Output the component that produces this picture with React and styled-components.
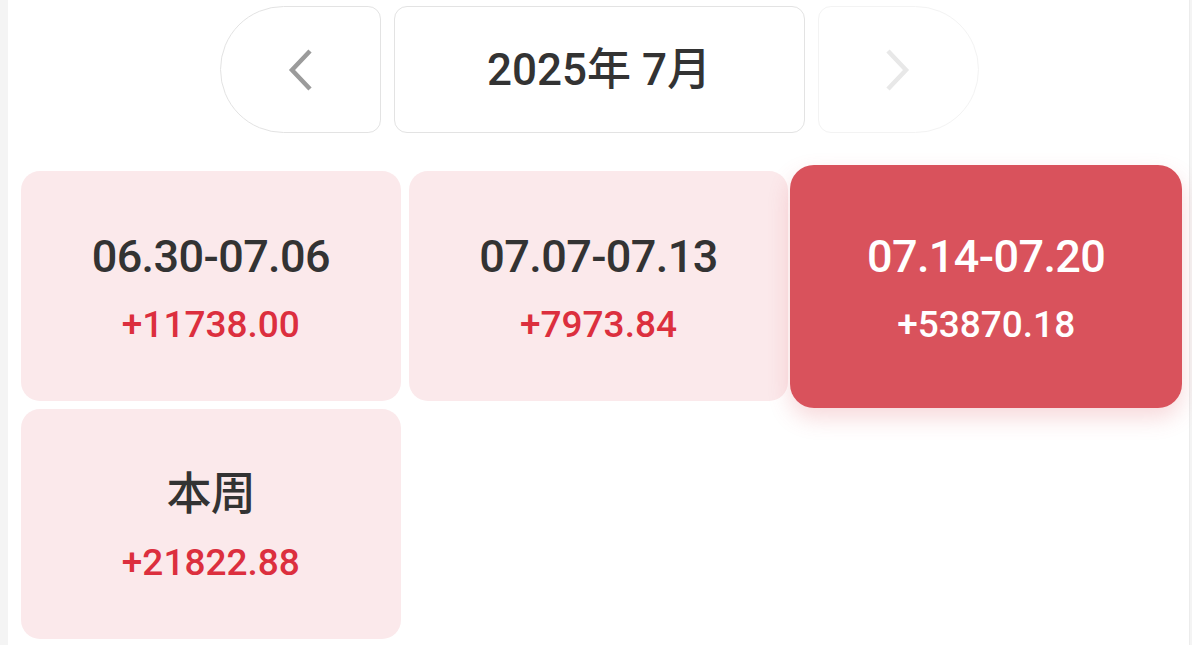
import React from "react";
import styled, { createGlobalStyle } from "styled-components";

const GlobalStyle = createGlobalStyle`
  html, body {
    margin: 0;
    padding: 0;
    background: #f4f4f4;
  }
  body {
    font-family: Roboto, "Noto Sans CJK SC", sans-serif;
  }
`;

const Page = styled.div`
  margin-left: 8px;
  width: 1182px;
  min-height: 645px;
  background: #ffffff;
  border-right: 1px solid #ececec;
  box-sizing: border-box;
`;

const Header = styled.div`
  display: flex;
  justify-content: center;
  gap: 13px;
  padding-top: 6px;
  padding-left: 1px;
`;

const NavButton = styled.button`
  width: 161px;
  height: 127px;
  box-sizing: border-box;
  background: #ffffff;
  border: 1px solid ${(p) => (p.$disabled ? "#f3f3f3" : "#e3e3e3")};
  border-radius: ${(p) => (p.$side === "left" ? "64px 13px 13px 64px" : "13px 64px 64px 13px")};
  display: flex;
  align-items: center;
  justify-content: center;
  padding: 0;
  cursor: pointer;
`;

const TitleBox = styled.div`
  width: 411px;
  height: 127px;
  box-sizing: border-box;
  border: 1px solid #e3e3e3;
  border-radius: 13px;
  display: flex;
  align-items: center;
  justify-content: center;
  font-size: 44px;
  font-weight: 500;
  color: #333333;
  line-height: 1;
`;

const Grid = styled.div`
  display: grid;
  grid-template-columns: repeat(3, 1fr);
  grid-auto-rows: 230px;
  gap: 8px;
  padding: 38px 13px 0;
`;

const Card = styled.div`
  border-radius: ${(p) => (p.$active ? "24px" : "19px")};
  background: ${(p) => (p.$active ? "#d9525c" : "#fbe9eb")};
  margin: ${(p) => (p.$active ? "-6.5px" : "0")};
  box-shadow: ${(p) => (p.$active ? "0 10px 22px rgba(217, 82, 92, 0.22)" : "none")};
  display: flex;
  flex-direction: column;
  align-items: center;
  justify-content: center;
  gap: 20px;
  padding-top: 6px;
  box-sizing: border-box;
`;

const Range = styled.div`
  font-size: 45px;
  line-height: 52px;
  font-weight: 500;
  letter-spacing: -0.6px;
  color: ${(p) => (p.$active ? "#ffffff" : "#333333")};
`;

const Amount = styled.div`
  font-size: 37px;
  line-height: 44px;
  font-weight: 500;
  color: ${(p) => (p.$active ? "#ffffff" : "#dc2f3e")};
`;

const Chevron = ({ dir, color }) => (
  <svg width="30" height="44" viewBox="0 0 30 44" fill="none">
    <path
      d={dir === "left" ? "M25 3 L7 22 L25 41" : "M5 3 L23 22 L5 41"}
      stroke={color}
      strokeWidth="4.5"
      strokeLinecap="butt"
      strokeLinejoin="miter"
    />
  </svg>
);

const weeks = [
  { range: "06.30-07.06", amount: "+11738.00" },
  { range: "07.07-07.13", amount: "+7973.84" },
  { range: "07.14-07.20", amount: "+53870.18", active: true },
  { range: "本周", amount: "+21822.88" },
];

export default function App() {
  return (
    <>
      <GlobalStyle />
      <Page>
        <Header>
          <NavButton $side="left" aria-label="上一月">
            <Chevron dir="left" color="#9b9b9b" />
          </NavButton>
          <TitleBox>2025年 7月</TitleBox>
          <NavButton $side="right" $disabled aria-label="下一月">
            <Chevron dir="right" color="#e8e8e8" />
          </NavButton>
        </Header>
        <Grid>
          {weeks.map((w) => (
            <Card key={w.range} $active={w.active}>
              <Range $active={w.active}>{w.range}</Range>
              <Amount $active={w.active}>{w.amount}</Amount>
            </Card>
          ))}
        </Grid>
      </Page>
    </>
  );
}
